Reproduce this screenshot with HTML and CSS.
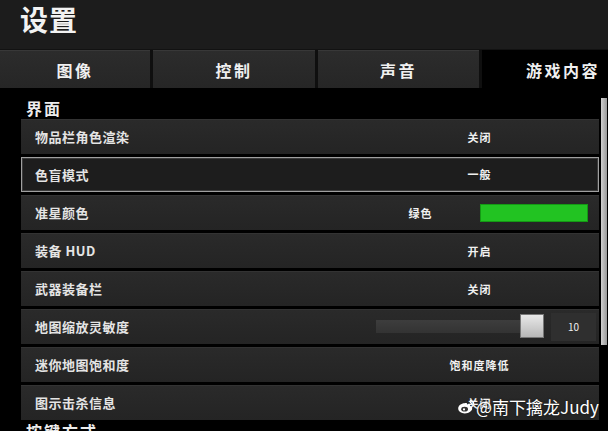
FILE: index.html
```html
<!DOCTYPE html>
<html lang="zh-CN">
<head>
  <meta charset="UTF-8">
  <title>设置</title>
  <meta name="viewport" content="width=device-width, initial-scale=1.0">
  <link rel="stylesheet" href="styles.css">
</head>
<body>
  <header class="top">
    <h1>设置</h1>
  </header>
  <nav class="tabs">
    <a class="tab">图像</a>
    <a class="tab">控制</a>
    <a class="tab">声音</a>
    <a class="tab active">游戏内容</a>
  </nav>
  <main class="panel">
    <div class="content">
      <h2>界面</h2>
      <ul class="rows">
        <li class="row"><span class="label">物品栏角色渲染</span><span class="value">关闭</span></li>
        <li class="row selected"><span class="label">色盲模式</span><span class="value">一般</span></li>
        <li class="row">
          <span class="label">准星颜色</span>
          <span class="value color">
            <span class="color-name">绿色</span>
            <span class="swatch"></span>
          </span>
        </li>
        <li class="row"><span class="label">装备 HUD</span><span class="value">开启</span></li>
        <li class="row"><span class="label">武器装备栏</span><span class="value">关闭</span></li>
        <li class="row">
          <span class="label">地图缩放灵敏度</span>
          <span class="value slider">
            <span class="track"><span class="thumb"></span></span>
            <span class="num">10</span>
          </span>
        </li>
        <li class="row"><span class="label">迷你地图饱和度</span><span class="value">饱和度降低</span></li>
        <li class="row"><span class="label">图示击杀信息</span><span class="value">关闭</span></li>
      </ul>
      <h2 class="next">按键方式</h2>
    </div>
    <div class="scrollbar"><div class="scroll-thumb"></div></div>
  </main>
  <div class="watermark">
    <svg class="weibo" width="18" height="16" viewBox="0 0 18 16">
      <path d="M7.5 4.2C4.3 4.2 1.2 6.6 1.2 9.6c0 2.8 3 4.8 6.6 4.8 4.2 0 7.4-2.4 7.4-4.8 0-1.4-1.2-2.2-2.2-2.5.5-1.2.2-2.2-1.2-2.2-.8 0-1.8.5-1.8.5.3-1-.4-1.6-2.5-1.2z" fill="#fff"/>
      <ellipse cx="7.6" cy="10.2" rx="3.4" ry="2.4" fill="#333"/>
      <circle cx="7" cy="10.4" r="1.1" fill="#fff"/>
      <path d="M13 1.5c2 0 3.6 1.6 3.6 3.6M12.8 3.4c1 0 1.8.8 1.8 1.8" stroke="#fff" stroke-width="1.2" fill="none"/>
    </svg>
    <span>@南下擒龙Judy</span>
  </div>
</body>
</html>
```

FILE: styles.css
```css
* {
  box-sizing: border-box;
}

html, body {
  margin: 0;
  padding: 0;
  width: 608px;
  height: 431px;
  overflow: hidden;
  background: #000;
  color: #e6e6e6;
  font-family: "Noto Sans CJK SC", "Noto Sans", sans-serif;
}

.top {
  height: 50px;
  background-color: #1c1c1c;
  border-bottom: 1px solid #121212;
}

.top h1 {
  margin: 0;
  padding-left: 20px;
  font-size: 28px;
  line-height: 38px;
  font-weight: bold;
  letter-spacing: 1px;
  color: #f2f2f2;
}

/* last tab runs past the right edge, as in the game menu */
.tabs {
  display: grid;
  grid-template-columns: 150px 162px 161px 1fr;
  column-gap: 3px;
  height: 38px;
  background-color: #0f0f0f;
  overflow: hidden;
}

.tab {
  display: flex;
  align-items: center;
  justify-content: center;
  background: linear-gradient(#2c2c2c, #262626);
  border-top: 1px solid #383838;
  color: #f0f0f0;
  font-size: 16px;
  font-weight: bold;
  letter-spacing: 2.5px;
}

.tab.active {
  background: #000;
  border-top-color: #000;
  justify-content: flex-end;
  padding-right: 8px;
}

.panel {
  display: flex;
  align-items: flex-start;
}

.content {
  margin-left: 21px;
  width: 578px;
}

h2 {
  margin: 10px 0 1px 5px;
  font-size: 16px;
  line-height: 20px;
  font-weight: bold;
  letter-spacing: 2px;
  color: #ececec;
}

h2.next {
  margin-top: 1px;
}

.rows {
  list-style: none;
  margin: 0;
  padding: 0;
  display: flex;
  flex-direction: column;
  gap: 3px;
}

.row {
  display: flex;
  align-items: center;
  height: 35px;
  padding-left: 14px;
  padding-right: 1px;
  padding-bottom: 1px;
  background: linear-gradient(#2a2a2a, #242424);
  border-top: 1px solid #333;
}

.row.selected {
  background: #1d1d1d;
  border-top: none;
  box-shadow: inset 0 0 0 1px #a0a0a0, inset 0 0 0 2px #3c3c3c;
}

.label {
  flex: 1;
  font-size: 13px;
  font-weight: bold;
  letter-spacing: 0.5px;
  color: #e4e4e4;
}

.value {
  width: 237px;
  text-align: center;
  font-size: 11px;
  font-weight: bold;
  letter-spacing: 1px;
  color: #f0f0f0;
}

.value.color {
  display: grid;
  grid-template-columns: 1fr 108px;
  align-items: center;
  padding-right: 10px;
}

.swatch {
  height: 18px;
  background-color: #22c322;
  border: 1px solid #149a14;
}

.value.slider {
  display: flex;
  align-items: center;
  gap: 7px;
  padding-left: 15px;
}

.track {
  position: relative;
  width: 168px;
  height: 13px;
  background: linear-gradient(#3d3d3d, #333);
}

.thumb {
  position: absolute;
  right: 0;
  top: -6px;
  width: 24px;
  height: 24px;
  background: linear-gradient(#e8e8e8, #b8b8b8);
  border: 1px solid #777;
}

.num {
  width: 45px;
  height: 28px;
  line-height: 28px;
  background-color: #2f2f2f;
  font-size: 10px;
  letter-spacing: 0;
  font-weight: normal;
}

.scrollbar {
  margin-left: 2px;
  width: 6px;
  padding-top: 10px;
}

.scroll-thumb {
  height: 247px;
  background: linear-gradient(90deg, #d0d0d0, #9a9a9a);
}

.watermark {
  position: absolute;
  left: 457px;
  top: 396px;
  display: flex;
  align-items: center;
  gap: 1px;
  color: #fff;
  font-size: 17px;
  line-height: 22px;
  text-shadow: 0 0 2px rgba(0, 0, 0, 0.6);
}
```
